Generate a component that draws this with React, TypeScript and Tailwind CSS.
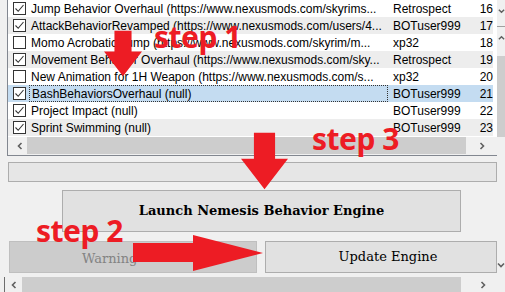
import React from 'react';

interface ModRow {
    name: string;
    author: string;
    id: number;
    checked: boolean;
}

const rows: ModRow[] = [
    { name: 'Jump Behavior Overhaul (https://www.nexusmods.com/skyrims...', author: 'Retrospect', id: 16, checked: true },
    { name: 'AttackBehaviorRevamped (https://www.nexusmods.com/users/4...', author: 'BOTuser999', id: 17, checked: true },
    { name: 'Momo Acrobatic Jump (https://www.nexusmods.com/skyrim/m...', author: 'xp32', id: 18, checked: false },
    { name: 'Movement Behavior Overhaul (https://www.nexusmods.com/sky...', author: 'Retrospect', id: 19, checked: true },
    { name: 'New Animation for 1H Weapon (https://www.nexusmods.com/s...', author: 'xp32', id: 20, checked: false },
    { name: 'BashBehaviorsOverhaul (null)', author: 'BOTuser999', id: 21, checked: true },
    { name: 'Project Impact (null)', author: 'BOTuser999', id: 22, checked: true },
    { name: 'Sprint Swimming (null)', author: 'BOTuser999', id: 23, checked: true },
];

const SELECTED = 5;

const Chevron: React.FC<{ dir: 'left' | 'right' | 'up' | 'down' }> = ({ dir }) => {
    const rot = { left: 'rotate-0', right: 'rotate-180', up: 'rotate-90', down: '-rotate-90' }[dir];
    return (
        <svg width="8" height="8" viewBox="0 0 8 8" className={rot}>
            <path d="M5.5 1 L2.5 4 L5.5 7" stroke="#606060" strokeWidth="1.6" fill="none" />
        </svg>
    );
};

const CheckBox: React.FC<{ checked: boolean }> = ({ checked }) => (
    <div className="w-[13px] h-[13px] border border-[#333333] bg-white flex items-center justify-center shrink-0">
        {checked && (
            <svg width="11" height="11" viewBox="0 0 11 11">
                <path d="M1.5 5.5 L4.2 8.3 L9.5 2" stroke="#333333" strokeWidth="1.1" fill="none" />
            </svg>
        )}
    </div>
);

const DownArrow: React.FC<{ className: string }> = ({ className }) => (
    <svg className={className} viewBox="0 0 40 48">
        <polygon points="11,0 29,0 29,22 40,22 20,48 0,22 11,22" fill="#ed1c24" />
    </svg>
);

const App: React.FC = () => {
    return (
        <div className="relative w-[505px] h-[292px] overflow-hidden bg-[#f0f0f0] font-['Liberation_Sans',sans-serif] text-black">
            {/* list view + right scrollbar */}
            <div className="flex h-[156px]">
                <div className="ml-[7px] w-[490px] border-l border-b border-[#828790] flex flex-col">
                    <div className="h-[137px] bg-white pr-[4px]">
                        {rows.map((r, i) => (
                            <div
                                key={r.id}
                                className={`h-[17px] flex items-center text-[12px] leading-none ${
                                    i === SELECTED ? 'bg-[#c4dcf1]' : i % 2 === 1 ? 'bg-[#ededed]' : 'bg-white'
                                }`}
                            >
                                <div className="w-[21px] pl-[5px] flex items-center">
                                    <CheckBox checked={r.checked} />
                                </div>
                                <div
                                    className={`w-[359px] h-full flex items-center pl-[2px] whitespace-nowrap overflow-hidden ${
                                        i === SELECTED ? 'border border-dotted border-[#333333]' : ''
                                    }`}
                                >
                                    {r.name}
                                </div>
                                <div className="w-[80px] pl-[5px] whitespace-nowrap">{r.author}</div>
                                <div className="flex-1 text-right">{r.id}</div>
                            </div>
                        ))}
                    </div>
                    <div className="h-[17px] flex items-center bg-[#f0f0f0]">
                        <div className="w-[18px] flex justify-end pr-[2px]">
                            <Chevron dir="left" />
                        </div>
                        <div className="w-[439px] h-full bg-[#cdcdcd] ml-[1px]" />
                        <div className="flex-1 flex justify-center">
                            <Chevron dir="right" />
                        </div>
                    </div>
                </div>
                <div className="w-[8px] h-[137px] flex flex-col">
                    <div className="h-[27px] border-b border-[#a0a0a0] flex items-start pt-[7px] pl-[1px]">
                        <Chevron dir="down" />
                    </div>
                    <div className="h-[29px] flex items-start pt-[7px] pl-[1px]">
                        <Chevron dir="up" />
                    </div>
                    <div className="flex-1 bg-[#cdcdcd]" />
                </div>
            </div>

            {/* progress box */}
            <div className="ml-[8px] mt-[6px] w-[489px] h-[20px] border border-[#adadad] bg-[#e6e6e6]" />

            {/* launch button */}
            <div className="ml-[62px] mt-[8px] w-[399px] h-[42px] border border-[#adadad] bg-[#e1e1e1] flex items-center justify-center font-['DejaVu_Serif',serif] font-bold text-[13px]">
                Launch Nemesis Behavior Engine
            </div>

            {/* warning + update */}
            <div className="flex mt-[9px] h-[32px]">
                <div className="ml-[9px] w-[248px] border border-[#bfbfbf] bg-[#cccccc] flex items-center pl-[72px] pt-[3px] font-['DejaVu_Serif',serif] text-[13px] text-[#838383]">
                    Warning
                </div>
                <div className="ml-[8px] w-[232px] border border-[#adadad] bg-[#e1e1e1] flex items-center justify-center pl-[14px] font-['DejaVu_Serif',serif] text-[13px]">
                    Update Engine
                </div>
                <div className="flex-1 flex items-end justify-center pb-[4px]">
                    <Chevron dir="down" />
                </div>
            </div>

            {/* bottom scrollbar */}
            <div className="flex mt-[4px] h-[15px] items-center">
                <div className="ml-[4px] w-[1px] h-full bg-[#6d6d6d]" />
                <div className="w-[17px] flex justify-center">
                    <Chevron dir="left" />
                </div>
                <div className="w-[439px] h-full bg-[#cdcdcd]" />
                <div className="w-[44px] flex justify-center">
                    <Chevron dir="right" />
                </div>
            </div>

            {/* annotations */}
            <DownArrow className="absolute left-[104px] top-[30px] w-[38px] h-[47px]" />
            <DownArrow className="absolute left-[241px] top-[131px] w-[47px] h-[60px]" />
            <svg className="absolute left-[133px] top-[235px] w-[130px] h-[36px]" viewBox="0 0 130 36">
                <polygon points="0,8 60,8 60,0 130,18 60,36 60,27 0,27" fill="#ed1c24" />
            </svg>
            <div className="absolute left-[154px] top-[22px] text-[30px] font-bold leading-none text-[#ed1c24] font-['Noto_Sans',sans-serif] tracking-[-0.5px]">
                step 1
            </div>
            <div className="absolute left-[312px] top-[124px] text-[30px] font-bold leading-none text-[#ed1c24] font-['Noto_Sans',sans-serif] tracking-[-0.5px]">
                step 3
            </div>
            <div className="absolute left-[36px] top-[216px] text-[30px] font-bold leading-none text-[#ed1c24] font-['Noto_Sans',sans-serif] tracking-[-0.5px]">
                step 2
            </div>
        </div>
    );
};

export default App;
